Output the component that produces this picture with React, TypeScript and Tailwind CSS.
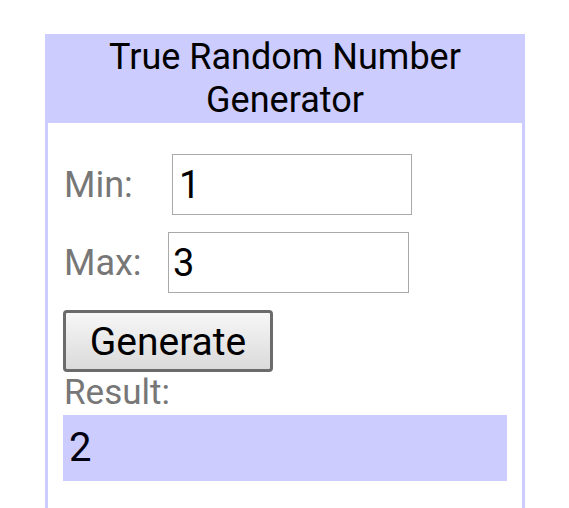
import { useState } from "react";

export default function App() {
  const [min, setMin] = useState("1");
  const [max, setMax] = useState("3");
  const [result, setResult] = useState("2");

  const handleGenerate = () => {
    const lo = parseInt(min, 10);
    const hi = parseInt(max, 10);
    if (isNaN(lo) || isNaN(hi) || hi < lo) return;
    setResult(String(lo + Math.floor(Math.random() * (hi - lo + 1))));
  };

  return (
    <div className="w-[569px] h-[508px] bg-white overflow-hidden font-['Roboto',sans-serif]">
      <div className="ml-[45px] mt-[34px] w-[480px] border-x-[3px] border-[#ccccff]">
        <div className="bg-[#ccccff] h-[89px] -mx-[3px] flex items-center justify-center text-center text-[36px] leading-[43px] text-black">
          True Random Number
          <br />
          Generator
        </div>

        <div className="px-[15px] pt-[31px] pb-[40px]">
          <div className="flex items-center h-[61px]">
            <span className="w-[109px] pl-px text-[36px] text-[#777777]">Min:</span>
            <input
              className="w-[240px] h-[61px] border border-[#a9a9a9] px-[6px] text-[38px] text-black outline-none"
              value={min}
              onChange={(e) => setMin(e.target.value)}
            />
          </div>

          <div className="flex items-center h-[61px] mt-[17px]">
            <span className="w-[105px] pl-px text-[36px] text-[#777777]">Max:</span>
            <input
              className="w-[241px] h-[61px] border border-[#a9a9a9] px-[4px] text-[38px] text-black outline-none"
              value={max}
              onChange={(e) => setMax(e.target.value)}
            />
          </div>

          <button
            onClick={handleGenerate}
            className="mt-[17px] w-[210px] h-[62px] rounded-[4px] border-[3px] border-[#6b6b6b] bg-linear-to-b from-[#f7f7f7] to-[#dadada] text-[39px] text-black"
          >
            Generate
          </button>

          <div className="text-[35px] leading-[40px] text-[#777777] pl-px mt-[1px]">Result:</div>
          <div className="mt-[2px] h-[66px] bg-[#ccccff] flex items-center px-[6px] text-[40px] text-[#000010]">
            {result}
          </div>
        </div>
      </div>
    </div>
  );
}
